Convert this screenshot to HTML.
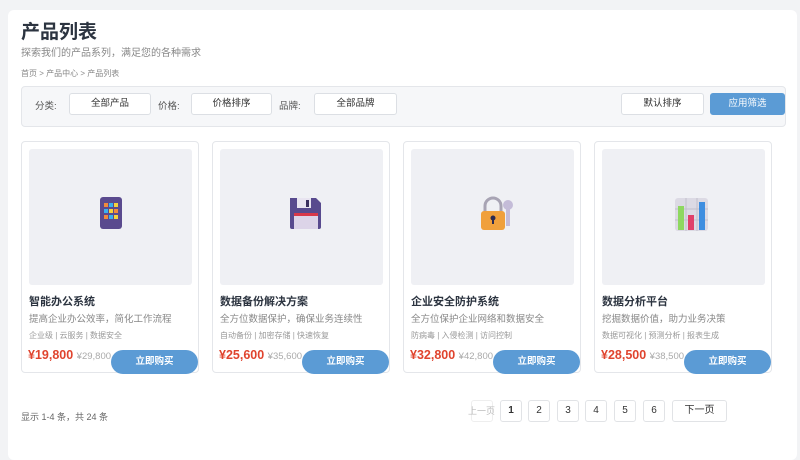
<!DOCTYPE html>
<html><head><meta charset="utf-8"><style>
*{box-sizing:border-box;margin:0;padding:0}
body{width:800px;height:445px;overflow:hidden;background:#f2f3f5;font-family:"Liberation Sans","Noto Sans CJK SC",sans-serif;position:relative}
.panel{position:absolute;left:8px;top:10px;width:789px;height:450px;background:#fff;border-radius:6px}
.abs{position:absolute}
h1{position:absolute;left:21px;top:20px;font-size:19px;font-weight:bold;color:#2c3440;line-height:26px}
.sub{left:21px;top:44px;font-size:10px;color:#888}
.bc{left:21px;top:68px;font-size:8px;color:#888}
.filter{left:21px;top:86px;width:765px;height:41px;background:#f6f7f9;border:1px solid #e4e6ea;border-radius:4px}
.lbl{font-size:9.5px;color:#555;top:98px}
.sel{top:93px;height:22px;background:#fff;border:1px solid #dcdfe4;border-radius:3px;font-size:9.5px;color:#333;text-align:center;line-height:20px}
.btnb{background:#5b9bd5;color:#fff;border-color:#5b9bd5}
.card{top:141px;width:178px;height:232px;border:1px solid #e4e6ea;border-radius:4px;background:#fff}
.img{position:absolute;left:7px;top:7px;width:163px;height:136px;background:#eff0f4;border-radius:3px}
.ic{position:absolute;left:67px;top:45px}
.t{position:absolute;left:7px;top:151px;font-size:11px;font-weight:bold;color:#2c3440}
.d{position:absolute;left:7px;top:169px;font-size:9.5px;color:#888}
.g{position:absolute;left:7px;top:188px;font-size:8px;color:#999}
.p{position:absolute;left:6px;top:206px;font-size:12.5px;font-weight:bold;color:#e0442e;white-space:nowrap}
.p span{font-size:9.5px;color:#aaa;font-weight:normal}
.buy{position:absolute;left:89px;top:208px;width:87px;height:24px;border-radius:12px;background:#5b9bd5;color:#fff;font-size:9.5px;font-weight:bold;text-align:center;line-height:24px}
.pg{top:400px;height:22px;border:1px solid #e1e3e6;border-radius:3px;font-size:10px;color:#333;text-align:center;line-height:20px;background:#fff}
</style></head><body>
<div class="panel"></div>
<h1>产品列表</h1>
<div class="abs sub">探索我们的产品系列，满足您的各种需求</div>
<div class="abs bc">首页 &gt; 产品中心 &gt; 产品列表</div>
<div class="abs filter"></div>
<div class="abs lbl" style="left:35px">分类:</div>
<div class="abs sel" style="left:69px;width:82px">全部产品</div>
<div class="abs lbl" style="left:158px">价格:</div>
<div class="abs sel" style="left:191px;width:81px">价格排序</div>
<div class="abs lbl" style="left:279px">品牌:</div>
<div class="abs sel" style="left:314px;width:83px">全部品牌</div>
<div class="abs sel" style="left:621px;width:83px">默认排序</div>
<div class="abs sel btnb" style="left:710px;width:75px">应用筛选</div>

<div class="abs card" style="left:21px"><div class="img"><svg class="ic" width="30" height="40" viewBox="0 0 30 40"><rect x="4" y="3" width="22" height="32" rx="3" fill="#5a4a8e"/><g><rect x="8" y="9" width="4" height="4" fill="#f08a3c"/><rect x="13" y="9" width="4" height="4" fill="#3ab0f0"/><rect x="18" y="9" width="4" height="4" fill="#f5d23c"/><rect x="8" y="15" width="4" height="4" fill="#3ab0f0"/><rect x="13" y="15" width="4" height="4" fill="#f5d23c"/><rect x="18" y="15" width="4" height="4" fill="#f08a3c"/><rect x="8" y="21" width="4" height="4" fill="#f08a3c"/><rect x="13" y="21" width="4" height="4" fill="#3ab0f0"/><rect x="18" y="21" width="4" height="4" fill="#f5d23c"/></g></svg></div>
<div class="t">智能办公系统</div><div class="d">提高企业办公效率，简化工作流程</div><div class="g">企业级 | 云服务 | 数据安全</div><div class="p">¥19,800 <span>¥29,800</span></div><div class="buy">立即购买</div></div>

<div class="abs card" style="left:212px"><div class="img"><svg class="ic" width="36" height="40" viewBox="0 0 36 40"><path d="M3 4h26l5 5v24a2 2 0 0 1-2 2H5a2 2 0 0 1-2-2z" fill="#584a8e"/><rect x="10" y="4" width="14" height="10" fill="#e8e4f0"/><rect x="19" y="6" width="3" height="7" fill="#3a2f5e"/><rect x="7" y="19" width="24" height="16" fill="#dcd4e8"/><rect x="7" y="19" width="24" height="3" fill="#d8384a"/></svg></div>
<div class="t">数据备份解决方案</div><div class="d">全方位数据保护，确保业务连续性</div><div class="g">自动备份 | 加密存储 | 快速恢复</div><div class="p">¥25,600 <span>¥35,600</span></div><div class="buy">立即购买</div></div>

<div class="abs card" style="left:403px"><div class="img"><svg class="ic" width="40" height="40" viewBox="0 0 40 40"><circle cx="30" cy="11" r="5" fill="#c4bcd8"/><rect x="28" y="12" width="4" height="20" fill="#c4bcd8"/><path d="M7 18v-6a8 8 0 0 1 16 0v6" stroke="#a8a4b4" stroke-width="3" fill="none"/><rect x="3" y="17" width="24" height="19" rx="3" fill="#f0a03c"/><circle cx="15" cy="24" r="2.5" fill="#2c2a50"/><rect x="14" y="24" width="2" height="6" fill="#2c2a50"/></svg></div>
<div class="t">企业安全防护系统</div><div class="d">全方位保护企业网络和数据安全</div><div class="g">防病毒 | 入侵检测 | 访问控制</div><div class="p">¥32,800 <span>¥42,800</span></div><div class="buy">立即购买</div></div>

<div class="abs card" style="left:594px"><div class="img"><svg class="ic" width="40" height="40" viewBox="0 0 40 40"><rect x="6" y="4" width="33" height="33" rx="3" fill="#dcdae4"/><path d="M6 15h33M6 26h33M17 4v33M28 4v33" stroke="#c2c0cc" stroke-width="1"/><rect x="9" y="12" width="6" height="24" fill="#8ed860"/><rect x="19" y="21" width="6" height="15" fill="#e0406a"/><rect x="30" y="8" width="6" height="28" fill="#3e8ee0"/></svg></div>
<div class="t">数据分析平台</div><div class="d">挖掘数据价值，助力业务决策</div><div class="g">数据可视化 | 预测分析 | 报表生成</div><div class="p">¥28,500 <span>¥38,500</span></div><div class="buy">立即购买</div></div>

<div class="abs" style="left:21px;top:410px;font-size:9px;color:#666">显示 1-4 条，共 24 条</div>
<div class="abs pg" style="left:471px;width:22px;color:#bbb;border-color:#eee;font-size:9px;overflow:visible;white-space:nowrap;text-indent:-4px">上一页</div>
<div class="abs pg btnb" style="left:500px;width:22px;font-weight:bold">1</div>
<div class="abs pg" style="left:528px;width:22px">2</div>
<div class="abs pg" style="left:557px;width:22px">3</div>
<div class="abs pg" style="left:585px;width:22px">4</div>
<div class="abs pg" style="left:614px;width:22px">5</div>
<div class="abs pg" style="left:643px;width:22px">6</div>
<div class="abs pg" style="left:672px;width:55px">下一页</div>
</body></html>
